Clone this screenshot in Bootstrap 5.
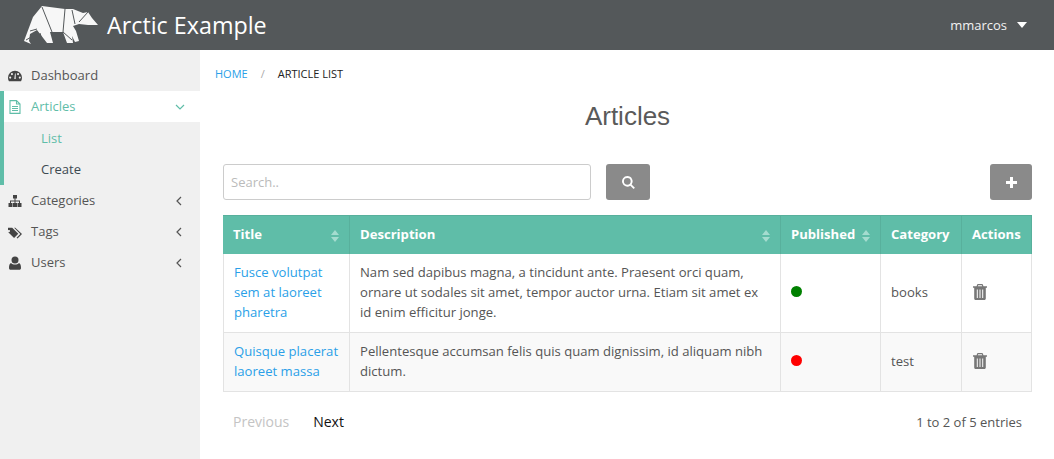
<!DOCTYPE html>
<html lang="en"><head><meta charset="utf-8"><title>Arctic Example</title>
<link href="https://cdn.jsdelivr.net/npm/bootstrap@5.3.0/dist/css/bootstrap.min.css" rel="stylesheet">
<style>
html,body{height:459px;overflow:hidden}
body{font-family:"Open Sans",sans-serif;font-size:13px;line-height:20px;color:#555;background:#fff}
.top-bar{height:50px;background:#54585a;color:#fff;padding:0 27px 0 24px}
.brand-name{font-size:23.300px;line-height:50px;margin-left:7px;color:#fff}
.user-name{font-size:13px;color:#f2f2f2}
.user-caret{width:0;height:0;border-left:5.500px solid transparent;border-right:5.500px solid transparent;border-top:6px solid #fff;margin-left:10px}
.shell{height:409px}
.side-bar{width:200px;background:#f0f0f0;padding-top:10px;flex:none}
.side-row{height:31px;line-height:31px;padding:0 15px 0 8px;color:#555;font-size:13px}
.side-row svg.ico{width:14px;height:14px;fill:#444;margin-right:9px;flex:none}
.side-row .chev{width:8px;height:10px;fill:none;stroke:#555;stroke-width:1.200;margin-left:auto;margin-right:2px}
.side-open{border-left:4px solid #5fbda8;padding-bottom:1px}
.side-open .side-row{padding-left:4px}
.side-row.side-head{background:#fff;color:#5fbda8}
.side-head svg.ico{fill:none;stroke:#5fbda8;stroke-width:1.100}
.side-head .chev{stroke:#5fbda8;width:10px;height:8px;margin-right:0}
.side-open .side-sub{padding-left:37px;color:#3e4a52;line-height:33px}
.side-open .side-sub.now{color:#5fbda8}
.main-pane{padding:0 22px 0 23px;min-width:0}
.crumbs{padding-top:14px;height:50px;margin-left:-8px;font-size:11px;line-height:20px;text-transform:uppercase;color:#222}
.crumbs a{color:#2a9fe8;text-decoration:none}
.crumbs .sep{color:#aaa;margin:0 13px}
.page-head{font-family:"Liberation Sans",sans-serif;font-size:26px;line-height:32px;text-align:center;color:#5a5a5a;margin:0 0 32px}
.search-box{width:368px;height:36px;border:1px solid #ccc;border-radius:3px;padding:0 7px;font-size:13px;box-shadow:none}
.search-box::placeholder{color:#bbb}
.tool-btn{height:36px;background:#8a8a8a;border:0;border-radius:3px;color:#fff;display:flex;align-items:center;justify-content:center;padding:0}
.tool-btn svg{width:15px;height:15px;fill:#fff}
.find-btn{width:44px;margin-left:15px}
.add-btn{width:42px;margin-left:auto}
.data-grid{table-layout:fixed;width:809px;margin:15px 0 0;border-collapse:separate;border-spacing:0;font-size:13.100px;line-height:20px}
.data-grid th{background:#5fbda8;color:#fff;font-weight:700;border-right:1px solid #58b09c;border-top:1px solid #58b09c;height:39px;padding:0 10px 3px;vertical-align:middle;position:relative;box-shadow:none}
.data-grid td{border-right:1px solid #e3e3e3;border-bottom:1px solid #e3e3e3;padding:8px 10px 10px;vertical-align:middle;color:#555;background:#fff;box-shadow:none}
.data-grid td:first-child{border-left:1px solid #e3e3e3}
.data-grid tr.alt-row td{background:#f9f9f9}
.data-grid a{color:#2a9fe8;text-decoration:none}
.w-title{width:127px}.w-desc{width:431px}.w-pub{width:100px}.w-cat{width:81px}.w-act{width:70px}
.sort-mark{position:absolute;right:10px;top:14px;width:8px;height:12px;fill:#a4dccf}
.dot-on,.dot-off{display:block;width:11px;height:11px;border-radius:50%;margin-bottom:2px}
.dot-on{background:green}.dot-off{background:red}
.bin{width:14px;height:16px;fill:#777;display:block;margin-left:1px;margin-bottom:1px}
.pager-row{margin-top:20px;padding:0 10px;line-height:20px}
.pg-off{color:#c4c4c4;font-size:14px;margin-right:24px}
.pg-on{color:#111;font-size:14px}
</style></head>
<body>
<header class="top-bar d-flex align-items-center">
<svg width="76" height="41" viewBox="24 5 76 41"><path fill="#f7f7f7" d="M42 6L65 9L73 9L83 13L88 12L92 18L98 25L88 25L79 24L73 26L76 31L79 41L75 42L72 36L73 43L67 43L63 32L50 32L53 43L47 43L37 30L30 34L29 41L31 44L24 41L30 25L33 17Z"/><path fill="none" stroke="#54585a" stroke-width="1" d="M42 7L52 32M65 9L63 32M72 10L75 24M79 22L88 12M63 32L72 40M30 31L37 29M33 36L26 40M40 33L43 43"/></svg>
<span class="brand-name">Arctic Example</span>
<div class="ms-auto d-flex align-items-center"><span class="user-name">mmarcos</span><span class="user-caret"></span></div>
</header>
<div class="shell d-flex">
<nav class="side-bar">
<div class="side-row d-flex align-items-center"><svg class="ico" viewBox="0 0 16 16"><path d="M8 2a8 8 0 0 0-8 8c0 1.500.4 2.900 1.100 4h13.800A8 8 0 0 0 16 10a8 8 0 0 0-8-8zM2.500 11a1.200 1.200 0 1 1 0-2.400 1.200 1.200 0 0 1 0 2.400zm2-4a1.200 1.200 0 1 1 0-2.400 1.200 1.200 0 0 1 0 2.400zm4.300 4.300-1.600.1L8 5h.8zM11.500 7a1.200 1.200 0 1 1 0-2.400 1.200 1.200 0 0 1 0 2.400zm2 4a1.200 1.200 0 1 1 0-2.400 1.200 1.200 0 0 1 0 2.400z" fill-rule="evenodd"/></svg>Dashboard</div>
<div class="side-open">
<div class="side-row side-head d-flex align-items-center"><svg class="ico" viewBox="0 0 14 14"><path d="M2 .6h6.500L12 4v9.400H2zM8.500.6V4H12M4 6.500h6M4 8.500h6M4 10.500h6"/></svg>Articles<svg class="chev" viewBox="0 0 10 8"><path d="M1 2l4 4 4-4"/></svg></div>
<div class="side-row side-sub now">List</div>
<div class="side-row side-sub">Create</div>
</div>
<div class="side-row d-flex align-items-center"><svg class="ico" viewBox="0 0 14 14"><path d="M5 1h4v3.500H7.500V6.500h4.500V9h1.500v4h-4V9H11V7.500H7.500V9H9v4H5V9h1.500V7.500H3V9h1.500v4h-4V9H2V6.500h4.500V4.500H5z"/></svg>Categories<svg class="chev" viewBox="0 0 8 10"><path d="M6 1L2 5l4 4"/></svg></div>
<div class="side-row d-flex align-items-center"><svg class="ico" viewBox="0 0 15 14"><path d="M0 2.500V7l6.500 6.500L11 9 4.500 2.500zM2.200 6a1.200 1.200 0 1 1 0-.1zM6.500 2.500l6.700 6.700-4 4 1 .8L15 9.200 7.800 2.500z" fill-rule="evenodd"/></svg>Tags<svg class="chev" viewBox="0 0 8 10"><path d="M6 1L2 5l4 4"/></svg></div>
<div class="side-row d-flex align-items-center"><svg class="ico" viewBox="0 0 14 14"><circle cx="7" cy="4" r="3.500"/><path d="M3 7c1 1 2.500 1.500 4 1.500S10 8 11 7c1.500.5 2 2.500 2 5 0 1-.7 1.800-1.700 1.800H2.700C1.700 13.800 1 13 1 12c0-2.500.5-4.500 2-5z"/></svg>Users<svg class="chev" viewBox="0 0 8 10"><path d="M6 1L2 5l4 4"/></svg></div>
</nav>
<main class="main-pane flex-grow-1">
<div class="crumbs"><a href="#">Home</a><span class="sep">/</span>Article List</div>
<h1 class="page-head">Articles</h1>
<div class="d-flex">
<input class="search-box form-control" type="text" placeholder="Search..">
<button class="tool-btn find-btn" type="button"><svg viewBox="0 0 15 15"><path fill-rule="evenodd" d="M6.300 1a5.300 5.300 0 0 1 4.300 8.400l3.300 3.300-1.300 1.300-3.300-3.300A5.300 5.300 0 1 1 6.300 1zm0 1.900a3.400 3.400 0 1 0 0 6.800 3.400 3.400 0 0 0 0-6.800z"/></svg></button>
<button class="tool-btn add-btn" type="button"><svg viewBox="0 0 15 15"><path d="M6 2h3v4h4v3H9v4H6V9H2V6h4z"/></svg></button>
</div>
<table class="data-grid">
<colgroup><col class="w-title"><col class="w-desc"><col class="w-pub"><col class="w-cat"><col class="w-act"></colgroup>
<thead><tr>
<th>Title<svg class="sort-mark" viewBox="0 0 8 12"><path d="M4 0l4 5H0zM4 12L0 7h8z"/></svg></th>
<th>Description<svg class="sort-mark" viewBox="0 0 8 12"><path d="M4 0l4 5H0zM4 12L0 7h8z"/></svg></th>
<th>Published<svg class="sort-mark" viewBox="0 0 8 12"><path d="M4 0l4 5H0zM4 12L0 7h8z"/></svg></th>
<th>Category</th><th>Actions</th></tr></thead>
<tbody>
<tr><td><a href="#">Fusce volutpat sem at laoreet pharetra</a></td><td>Nam sed dapibus magna, a tincidunt ante. Praesent orci quam, ornare ut sodales sit amet, tempor auctor urna. Etiam sit amet ex id enim efficitur jonge.</td><td><span class="dot-on"></span></td><td>books</td><td><svg class="bin" viewBox="0 0 14 16"><path fill-rule="evenodd" d="M4.500 0h5l1 2.200H14v1.500h-1.200V14.500c0 .8-.6 1.500-1.300 1.500h-9c-.7 0-1.300-.7-1.300-1.500V3.700H0V2.200h3.500zM5.200 1.200l-.4 1h4.400l-.4-1zM3.800 5.500v8.500h1v-8.500zM6.500 5.500v8.500h1v-8.500zM9.200 5.500v8.500h1v-8.500z"/></svg></td></tr>
<tr class="alt-row"><td><a href="#">Quisque placerat laoreet massa</a></td><td>Pellentesque accumsan felis quis quam dignissim, id aliquam nibh dictum.</td><td><span class="dot-off"></span></td><td>test</td><td><svg class="bin" viewBox="0 0 14 16"><path fill-rule="evenodd" d="M4.500 0h5l1 2.200H14v1.500h-1.200V14.500c0 .8-.6 1.500-1.300 1.500h-9c-.7 0-1.300-.7-1.300-1.500V3.700H0V2.200h3.500zM5.200 1.200l-.4 1h4.400l-.4-1zM3.800 5.500v8.500h1v-8.500zM6.500 5.500v8.500h1v-8.500zM9.200 5.500v8.500h1v-8.500z"/></svg></td></tr>
</tbody></table>
<div class="pager-row d-flex align-items-center"><span class="pg-off">Previous</span><span class="pg-on">Next</span><span class="ms-auto">1 to 2 of 5 entries</span></div>
</main>
</div>
<script src="https://cdn.jsdelivr.net/npm/bootstrap@5.3.0/dist/js/bootstrap.bundle.min.js"></script>
</body></html>
